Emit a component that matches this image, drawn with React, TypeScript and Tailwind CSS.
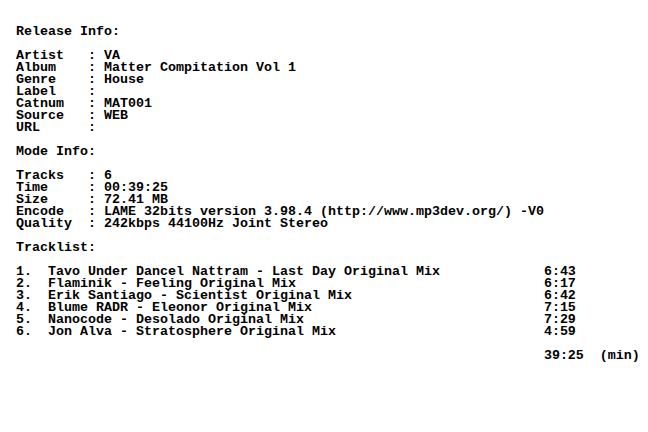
const tracks: [string, string][] = [
  ["Tavo Under Dancel Nattram - Last Day Original Mix", "6:43"],
  ["Flaminik - Feeling Original Mix", "6:17"],
  ["Erik Santiago - Scientist Original Mix", "6:42"],
  ["Blume RADR - Eleonor Original Mix", "7:15"],
  ["Nanocode - Desolado Original Mix", "7:29"],
  ["Jon Alva - Stratosphere Original Mix", "4:59"],
];

const field = (k: string, v: string) => (k.padEnd(9, " ") + ": " + v).trimEnd();

const lines: string[] = [
  "Release Info:",
  "",
  field("Artist", "VA"),
  field("Album", "Matter Compitation Vol 1"),
  field("Genre", "House"),
  field("Label", ""),
  field("Catnum", "MAT001"),
  field("Source", "WEB"),
  field("URL", ""),
  "",
  "Mode Info:",
  "",
  field("Tracks", "6"),
  field("Time", "00:39:25"),
  field("Size", "72.41 MB"),
  field("Encode", "LAME 32bits version 3.98.4 (http://www.mp3dev.org/) -V0"),
  field("Quality", "242kbps 44100Hz Joint Stereo"),
  "",
  "Tracklist:",
  "",
  ...tracks.map(([t, d], i) => (`${i + 1}.  ${t}`).padEnd(66, " ") + d),
  "",
  "".padEnd(66, " ") + "39:25  (min)",
];

export default function App() {
  return (
    <div className="w-[648px] h-[432px] bg-white overflow-hidden">
      <pre className="pt-[26px] pl-[16px] m-0 text-black font-bold text-[13.333px] leading-[12px] font-['Liberation_Mono',monospace]">
        {lines.join("\n")}
      </pre>
    </div>
  );
}
